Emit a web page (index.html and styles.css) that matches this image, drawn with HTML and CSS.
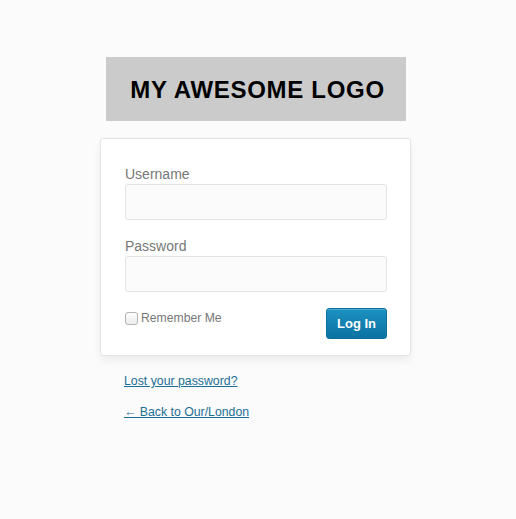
FILE: index.html
```html
<!DOCTYPE html>
<html>
<head>
<meta charset="utf-8">
<link rel="stylesheet" href="styles.css">
</head>
<body>
<div class="login">
  <div class="logo">MY AWESOME LOGO</div>
  <form class="card">
    <label class="field-label">Username</label>
    <div class="input"></div>
    <label class="field-label second">Password</label>
    <div class="input"></div>
    <div class="submit-row">
      <label class="remember"><span class="check"></span>Remember Me</label>
      <button type="button" class="btn">Log In</button>
    </div>
  </form>
  <div class="links">
    <a href="#" class="link">Lost your password?</a>
    <a href="#" class="link">← Back to Our/London</a>
  </div>
</div>
</body>
</html>
```
FILE: styles.css
```css
html, body {
  margin: 0;
  padding: 0;
  background: #fbfbfb;
  font-family: "Liberation Sans", Arial, sans-serif;
}
.login {
  width: 311px;
  margin-left: 100px;
  padding-top: 57px;
}
.logo {
  width: 300px;
  height: 64px;
  margin-left: 6px;
  background: #cbcbcb;
  color: #000;
  font-weight: bold;
  font-size: 24px;
  display: flex;
  align-items: center;
  justify-content: center;
  letter-spacing: 0.7px;
  padding: 1px 0 0 3px;
  box-sizing: border-box;
}
.card {
  display: flex;
  flex-direction: column;
  margin: 17px 0 0 0;
  padding: 25px 23px 16px 24px;
  background: #fff;
  border: 1px solid #e5e5e5;
  border-radius: 3px;
  box-shadow: 0 4px 10px -1px rgba(0,0,0,0.08);
}
.field-label {
  font-size: 14px;
  line-height: 20px;
  color: #777;
}
.field-label.second {
  margin-top: 16px;
}
.input {
  height: 34px;
  border: 1px solid #e3e3e3;
  border-radius: 3px;
  background: #fbfbfb;
}
.submit-row {
  display: flex;
  justify-content: space-between;
  align-items: flex-start;
  margin-top: 16px;
}
.remember {
  display: flex;
  align-items: center;
  font-size: 12.2px;
  color: #777;
  margin-top: 3px;
}
.check {
  width: 11px;
  height: 11px;
  border: 1px solid #b4b4b4;
  border-radius: 3px;
  background: linear-gradient(#fdfdfd, #ececec);
  margin-right: 3px;
}
.btn {
  width: 61px;
  height: 31px;
  padding: 0;
  border: 1px solid #0c6f9b;
  border-radius: 3px;
  background: linear-gradient(#1c91c2, #0a73a1);
  color: #fff;
  font-family: "Liberation Sans", Arial, sans-serif;
  font-weight: bold;
  font-size: 13px;
  box-shadow: inset 0 1px 0 rgba(120,200,230,0.5);
}
.links {
  display: flex;
  flex-direction: column;
  align-items: flex-start;
  gap: 16px;
  padding: 18px 0 0 24px;
}
.link {
  font-size: 12.3px;
  line-height: 15px;
  color: #1b6f95;
  text-decoration: underline;
}
```
